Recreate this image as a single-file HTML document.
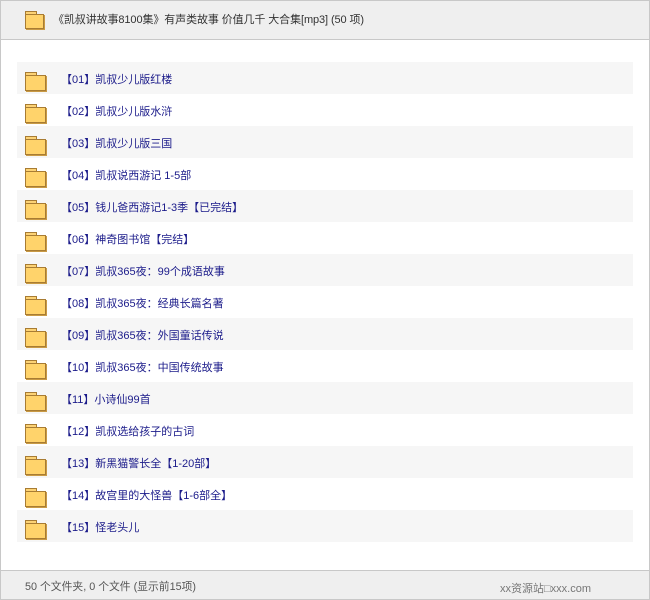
<!DOCTYPE html>
<html><head><meta charset="utf-8"><style>
*{margin:0;padding:0;box-sizing:border-box}
body{width:650px;height:600px;background:#fff;font-family:"Liberation Sans","Noto Sans CJK SC",sans-serif;position:relative;overflow:hidden}
.frame{position:absolute;left:0;top:0;width:650px;height:600px;border:1px solid #c8c8c8}
.hdr{position:absolute;left:1px;top:1px;width:648px;height:39px;background:#efefef;border-bottom:1px solid #c8c8c8}
.hdr .t{position:absolute;left:52px;top:11px;font-size:11px;color:#333;white-space:nowrap;line-height:16px;letter-spacing:-0.1px}
.fold{position:absolute}
.fold .tab{position:absolute;left:0;top:0;width:12px;height:5px;background:#fcd275;border:1px solid #a87c33;border-bottom:none}
.fold .body{position:absolute;left:0;top:3px;width:21px;height:16px;background:#ffd36b;border:1px solid #a87c33;box-shadow:1px 1px 0 #c99a45}
.row{position:absolute;left:17px;width:616px;height:32px}
.row.a{background:#f6f6f6}
.row .t{position:absolute;left:44px;top:10px;font-size:11px;color:#1b1b8a;white-space:nowrap;line-height:16px}
.row .fold{left:8px;top:10px}
.ftr{position:absolute;left:1px;top:570px;width:648px;height:29px;background:#efefef;border-top:1px solid #c8c8c8}
.ftr .l{position:absolute;left:24px;top:7px;font-size:10.8px;color:#555}
.ftr .r{position:absolute;left:499px;top:9px;font-size:11px;color:#777}
</style></head><body>
<div class="frame"></div>
<div class="hdr">
<div class="fold" style="left:24px;top:10px"><div class="tab"></div><div class="body" style="width:19px;height:15px"></div></div>
<div class="t">《凯叔讲故事8100集》有声类故事 价值几千 大合集[mp3] (50 项)</div>
</div>
<div class="row a" style="top:62px"><div class="fold"><div class="tab"></div><div class="body"></div></div><div class="t">【01】凯叔少儿版红楼</div></div>
<div class="row" style="top:94px"><div class="fold"><div class="tab"></div><div class="body"></div></div><div class="t">【02】凯叔少儿版水浒</div></div>
<div class="row a" style="top:126px"><div class="fold"><div class="tab"></div><div class="body"></div></div><div class="t">【03】凯叔少儿版三国</div></div>
<div class="row" style="top:158px"><div class="fold"><div class="tab"></div><div class="body"></div></div><div class="t">【04】凯叔说西游记 1-5部</div></div>
<div class="row a" style="top:190px"><div class="fold"><div class="tab"></div><div class="body"></div></div><div class="t">【05】钱儿爸西游记1-3季【已完结】</div></div>
<div class="row" style="top:222px"><div class="fold"><div class="tab"></div><div class="body"></div></div><div class="t">【06】神奇图书馆【完结】</div></div>
<div class="row a" style="top:254px"><div class="fold"><div class="tab"></div><div class="body"></div></div><div class="t">【07】凯叔365夜：99个成语故事</div></div>
<div class="row" style="top:286px"><div class="fold"><div class="tab"></div><div class="body"></div></div><div class="t">【08】凯叔365夜：经典长篇名著</div></div>
<div class="row a" style="top:318px"><div class="fold"><div class="tab"></div><div class="body"></div></div><div class="t">【09】凯叔365夜：外国童话传说</div></div>
<div class="row" style="top:350px"><div class="fold"><div class="tab"></div><div class="body"></div></div><div class="t">【10】凯叔365夜：中国传统故事</div></div>
<div class="row a" style="top:382px"><div class="fold"><div class="tab"></div><div class="body"></div></div><div class="t">【11】小诗仙99首</div></div>
<div class="row" style="top:414px"><div class="fold"><div class="tab"></div><div class="body"></div></div><div class="t">【12】凯叔选给孩子的古词</div></div>
<div class="row a" style="top:446px"><div class="fold"><div class="tab"></div><div class="body"></div></div><div class="t">【13】新黑猫警长全【1-20部】</div></div>
<div class="row" style="top:478px"><div class="fold"><div class="tab"></div><div class="body"></div></div><div class="t">【14】故宫里的大怪兽【1-6部全】</div></div>
<div class="row a" style="top:510px"><div class="fold"><div class="tab"></div><div class="body"></div></div><div class="t">【15】怪老头儿</div></div>
<div class="ftr"><div class="l">50 个文件夹, 0 个文件 (显示前15项)</div><div class="r">xx资源站□xxx.com</div></div>
</body></html>
